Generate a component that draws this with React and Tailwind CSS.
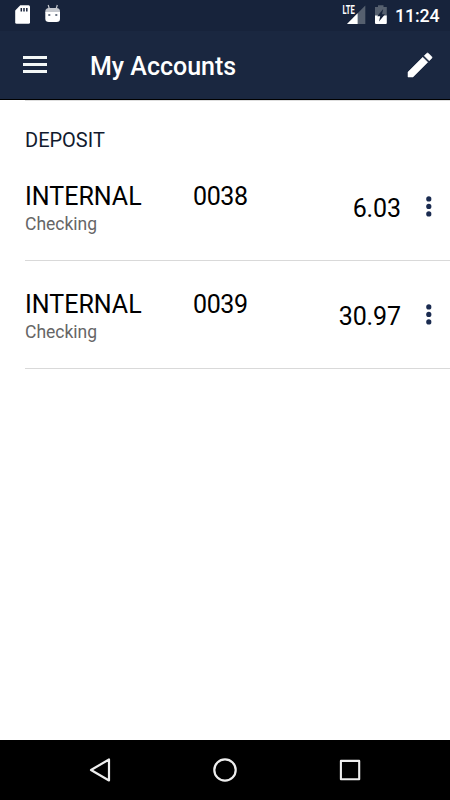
const accounts = [
  { name: 'INTERNAL', number: '0038', type: 'Checking', balance: '6.03' },
  { name: 'INTERNAL', number: '0039', type: 'Checking', balance: '30.97' },
];

function StatusBar() {
  return (
    <div className="flex h-[31px] shrink-0 items-start bg-[#17233b] text-white">
      <svg className="ml-[14px] mt-[4px] shrink-0" width="18" height="22" viewBox="0 0 18 22">
        <path d="M6.3 1.3H14.6Q16 1.3 16 2.8V18.3Q16 19.8 14.5 19.8H2.7Q1.2 19.8 1.2 18.3V6.5Z" fill="#fff" />
        <path d="M7.3 4v3.5M10 4v3.5M12.8 4v3.5" stroke="#17233b" strokeWidth="1.5" />
      </svg>
      <svg className="ml-[12px] mt-[4px] shrink-0" width="18" height="20" viewBox="0 0 18 20">
        <path d="M4.2 1l1.2 4M13.3 1l-1.2 4" stroke="#c5c8ce" strokeWidth="1.2" />
        <path d="M1.3 8.5V7.5Q1.3 4 5 4H12.5Q16 4 16 7.5V8.5Z" fill="#c5c8ce" />
        <path d="M1.3 8H16V15Q16 18 12.5 18H5Q1.3 18 1.3 15Z" fill="#fff" />
        <path d="M4.3 10h2v2h-2zM11.3 10h2v2h-2z" fill="#6b7484" />
      </svg>
      <div className="ml-auto flex items-start">
        <svg className="shrink-0" width="25" height="28" viewBox="0 0 25 28">
          <path d="M23.3 5.5V24H5Z" fill="#56606f" />
          <rect x="0" y="4.5" width="13.6" height="10.2" fill="#17233b" />
          <path d="M15.6 13.2V24H5Z" fill="#fff" />
          <rect x="0" y="4.5" width="13.4" height="10.2" fill="#17233b" />
          <text x="0.5" y="14.4" textLength="12.2" lengthAdjust="spacingAndGlyphs" fill="#fff" fontSize="12.5" fontWeight="700" fontFamily="Roboto, sans-serif">LTE</text>
        </svg>
        <svg className="ml-[7px] mt-[4px] shrink-0" width="14" height="22" viewBox="0 0 14 22">
          <path d="M4 1.2H9.5V3H12.8V12H1V3H4Z" fill="#56606f" />
          <path d="M1 11.5H12.8V19Q12.8 20 11.8 20H2Q1 20 1 19Z" fill="#fff" />
          <path d="M9.2 5L3.2 12.3H6.2L5 17.5L11 10.3H8Z" fill="#17233b" />
        </svg>
        <span className="ml-[7px] mr-[10px] mt-[4px] w-[45px] text-[17.8px] font-medium leading-6 tracking-[-0.1px]">11:24</span>
      </div>
    </div>
  );
}

function Header() {
  return (
    <header className="flex h-[69px] shrink-0 items-start border-b border-black bg-[#1a2740] text-white">
      <button aria-label="Menu" className="ml-[23px] mt-[25px] flex w-6 flex-col gap-1">
        <span className="h-[3px] bg-[#f3f7f6]" />
        <span className="h-[3px] bg-[#f3f7f6]" />
        <span className="h-[3px] bg-[#f3f7f6]" />
      </button>
      <h1 className="ml-[43px] mt-[20px] whitespace-nowrap text-[25px] font-medium leading-8">My Accounts</h1>
      <button aria-label="Edit" className="ml-auto mr-[14px] mt-[18px]">
        <svg width="32" height="32" viewBox="0 0 24 24" fill="#fff" stroke="#fff" strokeWidth="0.4" strokeLinejoin="round">
          <path d="M3 17.25V21h3.75L17.81 9.94l-3.75-3.75L3 17.25zM20.71 7.04a.996.996 0 0 0 0-1.41l-2.34-2.34a.996.996 0 0 0-1.41 0l-1.83 1.83 3.75 3.75 1.83-1.83z" />
        </svg>
      </button>
    </header>
  );
}

function AccountRow({ account }) {
  return (
    <li className="flex h-[108px] items-start border-b border-[#d9d9d9]">
      <div className="w-[168px] pt-[28px]">
        <div className="text-[25px] leading-8">{account.name}</div>
        <div className="-mt-px text-[17.5px] leading-6 text-[#666]">{account.type}</div>
      </div>
      <div className="pt-[28px] text-[25px] leading-8 tracking-[-0.4px]">{account.number}</div>
      <div className="ml-auto pt-[40px] text-[25px] leading-8 tracking-[-0.1px]">{account.balance}</div>
      <button aria-label="More" className="ml-[25px] mr-[18px] mt-[43px]">
        <svg width="6" height="22" viewBox="0 0 6 22" fill="#1a2b50">
          <circle cx="2.8" cy="2.9" r="2.6" />
          <circle cx="2.8" cy="10.4" r="2.6" />
          <circle cx="2.8" cy="17.9" r="2.6" />
        </svg>
      </button>
    </li>
  );
}

function NavBar() {
  return (
    <nav className="flex h-[60px] shrink-0 items-center justify-between bg-black px-[87px]">
      <svg width="26" height="28" viewBox="0 0 26 28" fill="none" stroke="#eee" strokeWidth="2.2" strokeLinejoin="round">
        <path d="M4 14L22 3.5V24.5Z" />
      </svg>
      <svg width="26" height="28" viewBox="0 0 26 28" fill="none" stroke="#eee" strokeWidth="2.2">
        <circle cx="13" cy="14" r="10.7" />
      </svg>
      <svg width="26" height="28" viewBox="0 0 26 28" fill="none" stroke="#eee" strokeWidth="2.1" strokeLinejoin="round">
        <rect x="3.9" y="4.9" width="18.3" height="18.3" />
      </svg>
    </nav>
  );
}

export default function App() {
  return (
    <div className="flex h-[800px] w-[450px] flex-col overflow-hidden bg-white font-[Roboto,sans-serif] text-black">
      <StatusBar />
      <Header />
      <main className="flex-1 pl-[25px]">
        <div className="h-px bg-[#dedede]" />
        <h2 className="h-[52px] pt-[27px] text-[20px] leading-6 text-[#111a2e]">DEPOSIT</h2>
        <ul>
          {accounts.map((account) => (
            <AccountRow key={account.number} account={account} />
          ))}
        </ul>
      </main>
      <NavBar />
    </div>
  );
}
